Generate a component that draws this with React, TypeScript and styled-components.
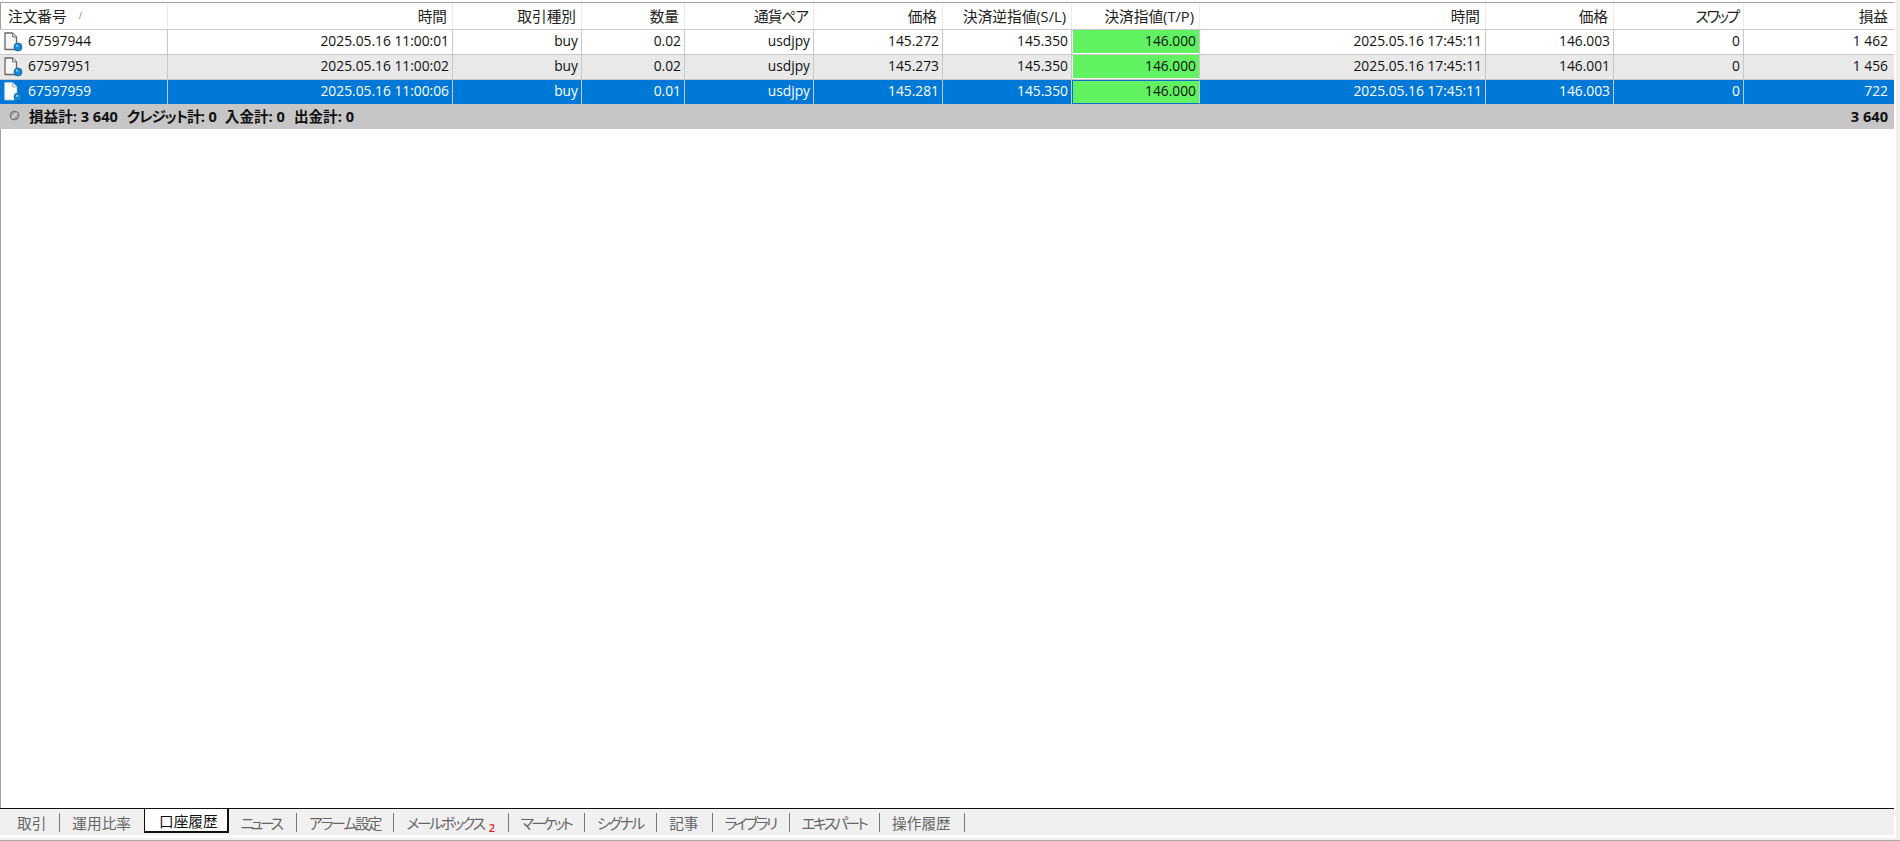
import { Fragment } from "react";
import styled, { createGlobalStyle } from "styled-components";

const columns = "168px 285px 129px 103px 129px 129px 129px 128px 286px 128px 130px 1fr";
const fontStack = `"Open Sans", "Noto Sans CJK JP", sans-serif`;

const GlobalStyle = createGlobalStyle`
  html, body {
    margin: 0;
    height: 100%;
    background: #f0f0f0;
    overflow: hidden;
  }
  body {
    font: 13.8px ${fontStack};
    font-feature-settings: "palt";
    color: #111;
  }
`;

const Frame = styled.div`
  height: 841px;
  box-sizing: border-box;
  display: flex;
  padding: 0 4px 2px 0;
  background: #f0f0f0;
  border-bottom: 1px solid #a8a8a8;
`;
const Pane = styled.div`
  flex: 1;
  min-width: 0;
  display: flex;
  flex-direction: column;
  padding: 2px 2px 3px 0;
  background: #fff;
`;
const TableArea = styled.div`
  flex: 1;
  border-top: 1px solid #a0a0a0;
  border-left: 1px solid #a0a0a0;
`;
const HeaderRow = styled.div`
  display: grid;
  grid-template-columns: ${columns};
  height: 27px;
  box-sizing: border-box;
  border-bottom: 1px solid #c8c8c8;
  margin-left: -1px;
`;
const HeaderCell = styled.div<{ $left?: boolean; $tracking?: number }>`
  display: flex;
  align-items: center;
  justify-content: ${(p) => (p.$left ? "flex-start" : "flex-end")};
  padding: ${(p) => (p.$left ? "0 0 1px 8px" : "0 5px 1px 0")};
  border-right: 1px solid #ebebeb;
  font-size: 14.67px;
  letter-spacing: ${(p) => p.$tracking ?? 0}px;
  color: #222;
  white-space: nowrap;
  &:last-child {
    border-right: none;
    padding-right: 6px;
  }
`;
const SortMark = styled.span`
  margin-left: 12px;
  font-size: 9px;
  color: #777;
`;
const Row = styled.div<{ $kind: "plain" | "alt" | "selected" }>`
  display: grid;
  grid-template-columns: ${columns};
  height: ${(p) => (p.$kind === "selected" ? "24px" : "25px")};
  box-sizing: border-box;
  margin-left: -1px;
  border-bottom: ${(p) => (p.$kind === "selected" ? "none" : "1px solid #c8c8c8")};
  background: ${(p) =>
    p.$kind === "selected" ? "#0078d7" : p.$kind === "alt" ? "#e9e9e9" : "#fff"};
  color: ${(p) => (p.$kind === "selected" ? "#fff" : "#111")};
`;
const Cell = styled.div<{ $left?: boolean }>`
  display: flex;
  align-items: center;
  justify-content: ${(p) => (p.$left ? "flex-start" : "flex-end")};
  padding: ${(p) => (p.$left ? "0 0 3px 3px" : "0 3px 3px 0")};
  border-right: 1px solid #c8c8c8;
  white-space: nowrap;
  &:last-child {
    border-right: none;
    padding-right: 6px;
  }
`;
const TakeProfit = styled(Cell)<{ $selected?: boolean }>`
  background: #61f261;
  color: #111;
  box-sizing: border-box;
  border: 1px solid ${(p) => (p.$selected ? "#0a6ed0" : "#fff")};
  border-top-color: ${(p) => (p.$selected ? "#0a6ed0" : "#61f261")};
  border-right-color: #c8c8c8;
`;
const IconSlot = styled.span`
  display: flex;
  margin-bottom: -3px;
`;
const OrderId = styled.span`
  margin-left: 5px;
`;
const SummaryRow = styled.div`
  height: 25px;
  margin-left: -1px;
  display: flex;
  align-items: center;
  justify-content: space-between;
  padding: 0 6px 2px 9px;
  box-sizing: border-box;
  background: #c6c6c6;
  font-size: 14.6px;
  font-weight: 700;
`;
const SummaryLeft = styled.div`
  display: flex;
  align-items: center;
  gap: 9px;
  white-space: pre;
`;
const SummaryItem = styled.span<{ $tracking?: number }>`
  letter-spacing: ${(p) => p.$tracking ?? 0}px;
  word-spacing: ${(p) => (p.$tracking ? "2px" : "0")};
`;
const TabBar = styled.div`
  height: 27px;
  box-sizing: border-box;
  display: flex;
  align-items: stretch;
  border-top: 1px solid #111;
  background: #f0f0f0;
  padding-left: 5px;
  font-size: 14.67px;
  color: #666;
`;
const Tab = styled.div<{ $active?: boolean; $tracking?: number; $trail?: number }>`
  display: flex;
  align-items: center;
  white-space: nowrap;
  letter-spacing: ${(p) => p.$tracking ?? 0}px;
  ${(p) =>
    p.$active
      ? `
    box-sizing: border-box;
    margin-top: -1px;
    height: 25px;
    padding: 0 9px 0 14px;
    background: #fff;
    color: #111;
    border: 1px solid #111;
    border-bottom-width: 2px;
    border-right-width: 2px;
  `
      : `
    padding: 0 ${13 + (p.$trail ?? 0)}px 0 12px;
  `}
`;
const Divider = styled.span`
  align-self: center;
  flex: none;
  width: 1px;
  height: 19px;
  background: #777;
`;
const Badge = styled.span`
  color: #f01818;
  font-size: 11px;
  font-weight: 600;
  letter-spacing: 0;
  margin: 11px 0 0 5px;
`;

function OrderIcon({ selected }: { selected?: boolean }) {
  return (
    <svg width="20" height="20" viewBox="0 0 20 20" aria-hidden="true">
      <path
        d="M2 1h7.5l4 4v12.5h-11.5z"
        fill={selected ? "#fff" : "#f8f8f8"}
        stroke={selected ? "#e8e8e8" : "#666"}
        strokeWidth="1.3"
        strokeLinejoin="round"
      />
      <path d="M9.5 1v4h4" fill="#ddd" stroke={selected ? "#bbb" : "#777"} strokeWidth="1" />
      <circle cx="15" cy="15" r="4" fill="#1688d8" stroke="#0c5f9f" strokeWidth="0.8" />
      <circle cx="14" cy="13.8" r="1.2" fill="#7cc4f0" />
    </svg>
  );
}

function SummaryIcon() {
  return (
    <svg width="11" height="11" viewBox="0 0 11 11" aria-hidden="true">
      <circle cx="5.5" cy="5.5" r="4.2" fill="#adadad" stroke="#777" strokeWidth="1.2" />
      <path d="M3 8l5-5" stroke="#e4e4e4" strokeWidth="1.2" />
    </svg>
  );
}

const headers = [
  { label: "時間" },
  { label: "取引種別" },
  { label: "数量" },
  { label: "通貨ペア", tracking: -1 },
  { label: "価格" },
  { label: "決済逆指値(S/L)" },
  { label: "決済指値(T/P)" },
  { label: "時間" },
  { label: "価格" },
  { label: "スワップ", tracking: -2.2 },
  { label: "損益" },
];

type Order = {
  id: string;
  open: string;
  lots: string;
  price: string;
  closePrice: string;
  profit: string;
  kind: "plain" | "alt" | "selected";
};

const orders: Order[] = [
  { id: "67597944", open: "2025.05.16 11:00:01", lots: "0.02", price: "145.272", closePrice: "146.003", profit: "1 462", kind: "plain" },
  { id: "67597951", open: "2025.05.16 11:00:02", lots: "0.02", price: "145.273", closePrice: "146.001", profit: "1 456", kind: "alt" },
  { id: "67597959", open: "2025.05.16 11:00:06", lots: "0.01", price: "145.281", closePrice: "146.003", profit: "722", kind: "selected" },
];

const tabs = [
  { label: "取引" },
  { label: "運用比率" },
  { label: "口座履歴", active: true },
  { label: "ニュース", tracking: -3.2, trail: 2.5 },
  { label: "アラーム設定", tracking: -2 },
  { label: "メールボックス", tracking: -2.2, badge: "2" },
  { label: "マーケット", tracking: -2.8 },
  { label: "シグナル", tracking: -2.1 },
  { label: "記事" },
  { label: "ライブラリ", tracking: -2.4 },
  { label: "エキスパート", tracking: -2.6 },
  { label: "操作履歴" },
];

export default function App() {
  return (
    <Frame>
      <GlobalStyle />
      <Pane>
        <TableArea>
          <HeaderRow>
            <HeaderCell $left>
              注文番号<SortMark>/</SortMark>
            </HeaderCell>
            {headers.map((h, i) => (
              <HeaderCell key={i} $tracking={h.tracking}>
                {h.label}
              </HeaderCell>
            ))}
          </HeaderRow>
          {orders.map((o) => {
            const selected = o.kind === "selected";
            return (
              <Row key={o.id} $kind={o.kind}>
                <Cell $left>
                  <IconSlot>
                    <OrderIcon selected={selected} />
                  </IconSlot>
                  <OrderId>{o.id}</OrderId>
                </Cell>
                <Cell>{o.open}</Cell>
                <Cell>buy</Cell>
                <Cell>{o.lots}</Cell>
                <Cell>usdjpy</Cell>
                <Cell>{o.price}</Cell>
                <Cell>145.350</Cell>
                <TakeProfit $selected={selected}>146.000</TakeProfit>
                <Cell>2025.05.16 17:45:11</Cell>
                <Cell>{o.closePrice}</Cell>
                <Cell>0</Cell>
                <Cell>{o.profit}</Cell>
              </Row>
            );
          })}
          <SummaryRow>
            <SummaryLeft>
              <SummaryIcon />
              <SummaryItem>損益計: 3 640</SummaryItem>
              <SummaryItem $tracking={-1.05}>クレジット計: 0</SummaryItem>
              <SummaryItem>入金計: 0</SummaryItem>
              <SummaryItem>出金計: 0</SummaryItem>
            </SummaryLeft>
            <span>3 640</span>
          </SummaryRow>
        </TableArea>
        <TabBar>
          {tabs.map((t, i) => {
            const nextActive = tabs[i + 1]?.active;
            return (
              <Fragment key={t.label}>
                <Tab $active={t.active} $tracking={t.tracking} $trail={t.trail}>
                  {t.label}
                  {t.badge && <Badge>{t.badge}</Badge>}
                </Tab>
                {!t.active && !nextActive && <Divider />}
              </Fragment>
            );
          })}
        </TabBar>
      </Pane>
    </Frame>
  );
}
